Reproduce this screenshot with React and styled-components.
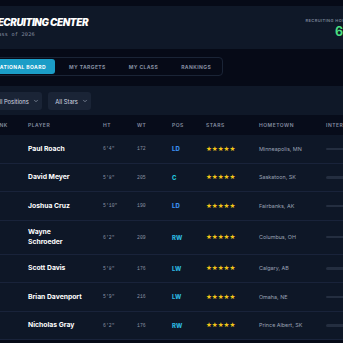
import styled, { createGlobalStyle } from "styled-components";

const Global = createGlobalStyle`
  html, body { margin: 0; padding: 0; background: #060a17; overflow: hidden; }
  body { font-family: Inter, "Liberation Sans", sans-serif; }
  * { box-sizing: border-box; }
`;

const players = [
    { rank: 1, name: "Paul Roach", ht: `6'4"`, wt: 172, pos: "LD", town: "Minneapolis, MN" },
    { rank: 2, name: "David Meyer", ht: `5'8"`, wt: 205, pos: "C", town: "Saskatoon, SK" },
    { rank: 3, name: "Joshua Cruz", ht: `5'10"`, wt: 190, pos: "LD", town: "Fairbanks, AK" },
    { rank: 4, name: "Wayne Schroeder", ht: `6'2"`, wt: 209, pos: "RW", town: "Columbus, OH" },
    { rank: 5, name: "Scott Davis", ht: `5'8"`, wt: 176, pos: "LW", town: "Calgary, AB" },
    { rank: 6, name: "Brian Davenport", ht: `5'9"`, wt: 216, pos: "LW", town: "Omaha, NE" },
    { rank: 7, name: "Nicholas Gray", ht: `6'2"`, wt: 176, pos: "RW", town: "Prince Albert, SK" },
];

const posColors = { LD: "#3b8ff0", RD: "#3b8ff0", C: "#22c2da", LW: "#2cb4df", RW: "#2cb4df" };

const COLS = "36.5px 75px 34px 35px 34px 53px 67px 1fr";

export default function App() {
    return (
        <>
            <Global />
            <Viewport>
                <Page>
                    <Header>
                        <div>
                            <Title>RECRUITING CENTER</Title>
                            <Sub>Class of 2026</Sub>
                        </div>
                        <Stat>
                            <StatLabel>RECRUITING HOURS</StatLabel>
                            <StatValue>64</StatValue>
                        </Stat>
                    </Header>

                    <TabBand>
                        <Tabs>
                            <Tab $active>NATIONAL BOARD</Tab>
                            <Tab>MY TARGETS</Tab>
                            <Tab>MY CLASS</Tab>
                            <Tab>RANKINGS</Tab>
                        </Tabs>
                    </TabBand>

                    <Filters>
                        <Select>
                            All Positions
                            <Chevron />
                        </Select>
                        <Select>
                            All Stars
                            <Chevron />
                        </Select>
                    </Filters>

                    <Table>
                        <HeadRow>
                            <span>RANK</span>
                            <span>PLAYER</span>
                            <span>HT</span>
                            <span>WT</span>
                            <span>POS</span>
                            <span>STARS</span>
                            <span>HOMETOWN</span>
                            <span>INTEREST</span>
                        </HeadRow>
                        {players.map(p => (
                            <Row key={p.rank}>
                                <Rank>{p.rank}</Rank>
                                <Name>{p.name}</Name>
                                <Small>{p.ht}</Small>
                                <Small>{p.wt}</Small>
                                <Pos $color={posColors[p.pos]}>{p.pos}</Pos>
                                <Stars>★★★★★</Stars>
                                <Town>{p.town}</Town>
                                <Track />
                            </Row>
                        ))}
                    </Table>
                </Page>
            </Viewport>
        </>
    );
}

function Chevron() {
    return (
        <svg width="6" height="6" viewBox="0 0 24 24" fill="none" stroke="#8b94a6" strokeWidth="3" strokeLinecap="round" strokeLinejoin="round">
            <path d="m6 9 6 6 6-6" />
        </svg>
    );
}

const Viewport = styled.div`
    display: flex;
    justify-content: center;
    width: 100%;
    padding-top: 6px;
`;

const Page = styled.div`
    width: 392px;
    flex-shrink: 0;
`;

const Header = styled.div`
    height: 43px;
    background: #0f1828;
    padding: 0 16px;
    display: flex;
    align-items: center;
    justify-content: space-between;
`;

const Title = styled.div`
    font-size: 9.8px;
    font-weight: 900;
    font-style: italic;
    letter-spacing: -0.04em;
    color: #fff;
    line-height: 12px;
`;

const Sub = styled.div`
    font-family: "DejaVu Sans Mono", monospace;
    font-size: 5.2px;
    color: #8a93a6;
    line-height: 7px;
    margin-top: 2px;
    letter-spacing: 0.04em;
`;

const Stat = styled.div`
    display: flex;
    flex-direction: column;
    align-items: flex-end;
    margin-top: 1px;
`;

const StatLabel = styled.div`
    font-size: 4px;
    font-weight: 600;
    letter-spacing: 0.1em;
    color: #7c8598;
    line-height: 6px;
`;

const StatValue = styled.div`
    font-size: 12.5px;
    font-weight: 700;
    color: #4ade80;
    line-height: 14px;
    margin-top: 1px;
`;

const TabBand = styled.div`
    display: flex;
    background: #060a17;
    padding: 8px 8.5px 10px;
`;

const Tabs = styled.div`
    display: flex;
    gap: 4px;
    padding: 1px;
    border: 1px solid #1a2436;
    border-radius: 4px;
`;

const Tab = styled.div`
    height: 15px;
    padding: 0 9.5px;
    display: flex;
    align-items: center;
    font-size: 5px;
    font-weight: 700;
    letter-spacing: 0.08em;
    border-radius: 3px;
    color: ${p => (p.$active ? "#ffffff" : "#858ea1")};
    background: ${p => (p.$active ? "#1b9dc7" : "transparent")};
`;

const Filters = styled.div`
    background: #0f1828;
    padding: 6px 12.5px 5px;
    display: flex;
    gap: 6px;
`;

const Select = styled.div`
    height: 18px;
    padding: 0 3px 0 7.5px;
    display: flex;
    align-items: center;
    gap: 4px;
    border-radius: 3px;
    background: #1a2436;
    color: #d3d8e1;
    font-size: 5.8px;
`;

const Table = styled.div`
    background: #0e1727;
`;

const HeadRow = styled.div`
    display: grid;
    grid-template-columns: ${COLS};
    align-items: center;
    height: 20px;
    padding: 0 16px;
    background: #070c1a;
    font-size: 5px;
    font-weight: 600;
    letter-spacing: 0.1em;
    color: #858ea1;
    white-space: nowrap;
`;

const Row = styled.div`
    display: grid;
    grid-template-columns: ${COLS};
    align-items: center;
    min-height: 28.5px;
    padding: 6px 16px;
    border-bottom: 1px solid #19233a;
`;

const Rank = styled.span`
    font-size: 6px;
    font-weight: 700;
    color: #8a93a6;
`;

const Name = styled.span`
    font-size: 6.8px;
    font-weight: 700;
    line-height: 10.5px;
    color: #ffffff;
    padding-right: 17px;
`;

const Small = styled.span`
    font-family: "Liberation Mono", monospace;
    font-size: 4.8px;
    color: #8a93a6;
`;

const Pos = styled.span`
    font-size: 6px;
    font-weight: 800;
    color: ${p => p.$color};
`;

const Stars = styled.span`
    font-family: "DejaVu Sans", sans-serif;
    font-size: 6.6px;
    color: #f5c518;
    letter-spacing: -0.01em;
`;

const Town = styled.span`
    font-size: 5.4px;
    color: #9aa2b4;
    white-space: nowrap;
`;

const Track = styled.div`
    height: 2.5px;
    border-radius: 2px;
    background: #242e40;
`;
